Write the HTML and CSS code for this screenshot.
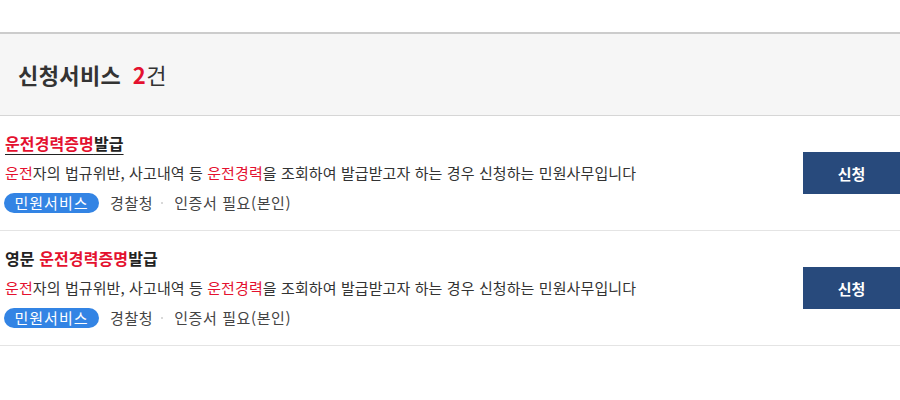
FILE: index.html
```html
<!DOCTYPE html>
<html lang="ko">
<head>
<meta charset="utf-8">
<link rel="stylesheet" href="styles.css">
</head>
<body>
<div class="page">
  <div class="summary">
    <h2 class="summary-title">신청서비스 <span class="count"><b>2</b>건</span></h2>
  </div>
  <ul class="list">
    <li class="item">
      <div class="info">
        <a class="title underline"><em>운전경력증명</em>발급</a>
        <p class="desc"><em>운전</em>자의 법규위반, 사고내역 등 <em>운전경력</em>을 조회하여 발급받고자 하는 경우 신청하는 민원사무입니다</p>
        <div class="meta">
          <span class="badge">민원서비스</span>
          <span class="org">경찰청</span>
          <span class="dot"></span>
          <span class="need">인증서 필요(본인)</span>
        </div>
      </div>
      <a class="btn">신청</a>
    </li>
    <li class="item">
      <div class="info">
        <a class="title">영문 <em>운전경력증명</em>발급</a>
        <p class="desc"><em>운전</em>자의 법규위반, 사고내역 등 <em>운전경력</em>을 조회하여 발급받고자 하는 경우 신청하는 민원사무입니다</p>
        <div class="meta">
          <span class="badge">민원서비스</span>
          <span class="org">경찰청</span>
          <span class="dot"></span>
          <span class="need">인증서 필요(본인)</span>
        </div>
      </div>
      <a class="btn">신청</a>
    </li>
  </ul>
</div>
</body>
</html>
```
FILE: styles.css
```css
* { box-sizing: border-box; }
html, body { margin: 0; padding: 0; background: #fff; }
body {
  font-family: "Noto Sans CJK KR", "Noto Sans", sans-serif;
  color: #333;
}
.page { padding-top: 32px; }
.summary {
  border-top: 2px solid #cccccc;
  border-bottom: 1px solid #d6d6d6;
  background: #f6f6f6;
  height: 84px;
  display: flex;
  align-items: center;
  padding-left: 18px;
}
.summary-title {
  margin: 0 0 2px;
  font-size: 22px;
  font-weight: 700;
  color: #333;
  letter-spacing: 0.4px;
  line-height: 1;
  word-spacing: 5px;
}
.count { font-weight: 400; color: #333; }
.count b { color: #e4112f; font-weight: 700; }
.list { list-style: none; margin: 0; padding: 0; }
.item {
  display: flex;
  align-items: center;
  justify-content: space-between;
  border-bottom: 1px solid #e4e4e4;
  height: 115px;
  padding-left: 5px;
}
.info { display: flex; flex-direction: column; margin-top: -1px; }
.title {
  font-size: 16px;
  font-weight: 700;
  color: #222;
  line-height: 20px;
  text-decoration: none;
  align-self: flex-start;
  letter-spacing: 0.1px;
}
.title.underline {
  text-decoration: underline;
  text-decoration-color: #222;
  text-underline-offset: 4px;
  text-decoration-thickness: 1px;
}
em { font-style: normal; color: #e4112f; }
.desc {
  margin: 10px 0 0;
  font-size: 15px;
  line-height: 20px;
  color: #333;
  letter-spacing: 0.1px;
}
.meta {
  display: flex;
  align-items: center;
  margin-top: 10px;
  font-size: 15px;
  line-height: 20px;
  color: #444;
  letter-spacing: 0.6px;
}
.badge {
  display: inline-flex;
  align-items: center;
  justify-content: center;
  height: 20px;
  width: 95px;
  margin-left: -1px;
  border-radius: 10px;
  background: #3384e4;
  color: #fff;
  letter-spacing: 1px;
  font-size: 15px;
}
.org { margin-left: 11px; }
.dot {
  width: 2px; height: 2px; background: #ccc; border-radius: 50%;
  margin: 0 11px 0 8px;
}
.btn {
  display: flex;
  align-items: center;
  justify-content: center;
  width: 97px;
  height: 42px;
  background: #284a7c;
  color: #fff;
  font-size: 15px;
  font-weight: 700;
  text-decoration: none;
}
```
